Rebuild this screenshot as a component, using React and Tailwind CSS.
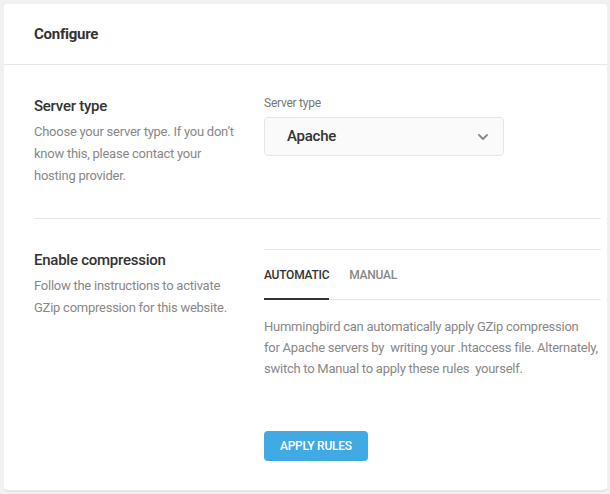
import React, { useState } from "react";

const Chevron = () => (
  <svg width="10" height="6" viewBox="0 0 10 6" fill="none" className="text-[#888]">
    <path d="M1 1l4 4 4-4" stroke="currentColor" strokeWidth="1.8" strokeLinecap="round" strokeLinejoin="round" />
  </svg>
);

const Row = ({ title, desc, children, last }) => (
  <div className={`flex pt-[30px] ${last ? "pb-[29px]" : "pb-[31px] border-b border-[#e6e6e6]"}`}>
    <div className="w-[230px] shrink-0">
      <h3 className="text-[15px] leading-[22px] font-medium text-[#333]">{title}</h3>
      <p className="mt-[4px] w-[205px] text-[13px] leading-[22px] text-[#888]">{desc}</p>
    </div>
    <div className="flex-1">{children}</div>
  </div>
);

export default function App() {
  const [tab, setTab] = useState("auto");

  return (
    <div
      className="min-h-[494px] bg-[#f1f1f1] pt-[4px] pl-[4px] tracking-[-0.25px]"
      style={{ fontFamily: "Roboto, 'Liberation Sans', sans-serif" }}
    >
      <div className="w-[603px] h-[486px] bg-white rounded-[4px] shadow-[0_2px_0_#e6e6e6]">
        <div className="h-[61px] flex items-center px-[30px] border-b border-[#e6e6e6]">
          <h2 className="text-[15px] font-bold text-[#333]">Configure</h2>
        </div>

        <div className="pl-[30px] pr-[6px]">
          <Row
            title="Server type"
            desc="Choose your server type. If you don’t know this, please contact your hosting provider."
          >
            <label className="block text-[12px] leading-[16px] text-[#777]">Server type</label>
            <button className="mt-[6px] w-[240px] h-[39px] flex items-center justify-between pl-[22px] pr-[15px] bg-[#fafafa] border border-[#e6e6e6] rounded-[4px]">
              <span className="text-[15px] font-medium text-[#333]">Apache</span>
              <Chevron />
            </button>
          </Row>

          <Row
            last
            title="Enable compression"
            desc="Follow the instructions to activate GZip compression for this website."
          >
            <div className="border-t border-[#e6e6e6]">
              <div className="flex gap-[20px] border-b border-[#e6e6e6]">
                <button
                  onClick={() => setTab("auto")}
                  className={`pt-[17px] pb-[15px] text-[12px] leading-[16px] font-medium border-b-2 -mb-px ${tab === "auto" ? "text-[#333] border-[#333]" : "text-[#888] border-transparent"}`}
                >
                  AUTOMATIC
                </button>
                <button
                  onClick={() => setTab("manual")}
                  className={`pt-[17px] pb-[15px] text-[12px] leading-[16px] font-medium border-b-2 -mb-px ${tab === "manual" ? "text-[#333] border-[#333]" : "text-[#888] border-transparent"}`}
                >
                  MANUAL
                </button>
              </div>
              <p className="mt-[16px] text-[13px] leading-[21px] text-[#888] whitespace-nowrap">
                Hummingbird can automatically apply GZip compression
                <br />
                for Apache servers by&nbsp; writing your .htaccess file. Alternately,
                <br />
                switch to Manual to apply these rules&nbsp; yourself.
              </p>
              <button className="mt-[52px] h-[30px] px-[16px] bg-[#41a9e3] rounded-[4px] text-white text-[12px] font-medium">
                APPLY RULES
              </button>
            </div>
          </Row>
        </div>
      </div>
    </div>
  );
}
